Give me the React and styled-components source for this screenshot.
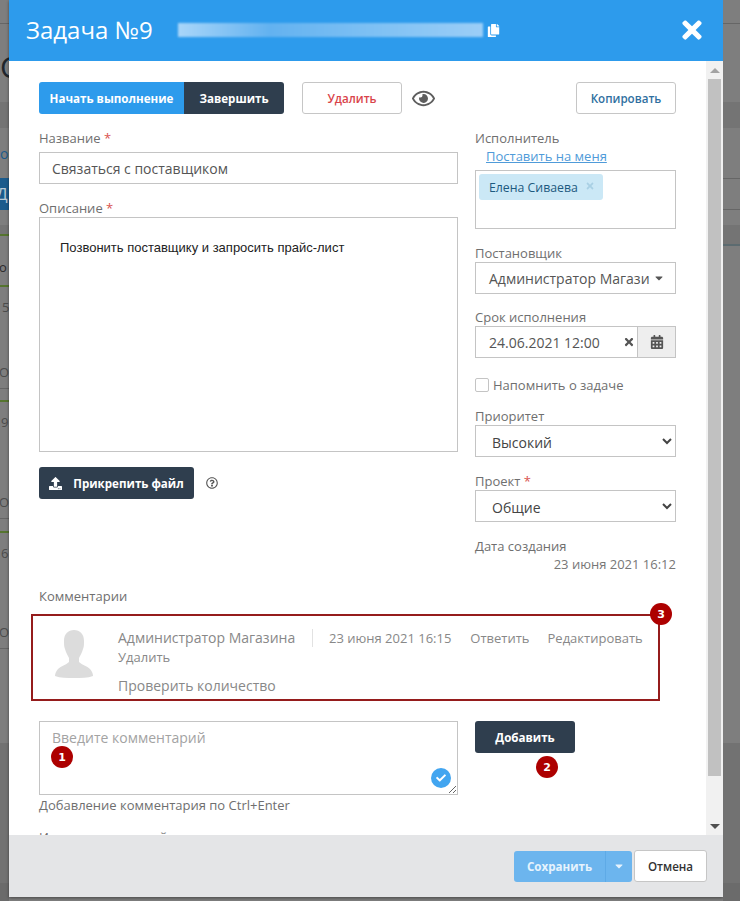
import React from 'react'
import styled, { createGlobalStyle } from 'styled-components'
import { FaCalendarAlt, FaCaretDown, FaCheck, FaCopy, FaRegEye, FaRegQuestionCircle, FaTimes, FaUpload } from 'react-icons/fa'

const GlobalStyle = createGlobalStyle`
    html, body {
        margin: 0;
        padding: 0;
        background: #7e7e7e;
    }
    * {
        box-sizing: border-box;
    }
`;

const base = '#7e7e7e';
const band = '#747474';
const line = '#666';
const green = '#56752f';
const dark = '#727272';
const darker = '#6b6b6b';

const leftRows = [
    { h: 23 }, { h: 1, bg: line }, { h: 26 },
    { h: 34, t: 'С', s: 30, c: '#20262c' },
    { h: 18 }, { h: 26, bg: band }, { h: 16 },
    { h: 20, t: 'о', s: 14, c: '#1b5b8c' },
    { h: 14 }, { h: 32, bg: '#1b5b8c', t: 'Д', s: 17, c: '#b8c8d4', x: -4 },
    { h: 15 }, { h: 9, bg: band }, { h: 2, bg: green }, { h: 20 },
    { h: 22, t: 'о', s: 13, c: '#2a2a2a', x: -1 },
    { h: 7 }, { h: 2, bg: green }, { h: 9 },
    { h: 22, t: '5', s: 13, c: '#4c4c4c', x: 2 },
    { h: 43 }, { h: 22, t: 'О', s: 13, c: '#4c4c4c', x: -1 },
    { h: 5 }, { h: 1, bg: line }, { h: 11 }, { h: 2, bg: green }, { h: 9 },
    { h: 22, t: '9', s: 13, c: '#4c4c4c', x: 1 },
    { h: 58 }, { h: 22, t: 'О', s: 13, c: '#4c4c4c', x: -1 },
    { h: 5 }, { h: 1, bg: line }, { h: 12 }, { h: 2, bg: green }, { h: 9 },
    { h: 22, t: '6', s: 13, c: '#4c4c4c', x: 1 },
    { h: 57 }, { h: 22, t: 'О', s: 13, c: '#4c4c4c', x: -1 },
    { h: 5 }, { h: 1, bg: line }, { h: 94 },
    { h: 140, bg: dark }, { h: 18, bg: darker },
];

const rightRows = [
    { h: 23 }, { h: 1, bg: line }, { h: 78 }, { h: 26, bg: band }, { h: 50 },
    { h: 1, bg: line }, { h: 30 }, { h: 1, bg: line }, { h: 15 },
    { h: 19, bg: band }, { h: 2, bg: '#5c6b70' }, { h: 497 },
    { h: 140, bg: dark }, { h: 18, bg: darker },
];

const Page = styled.div`
    display: grid;
    grid-template-columns: 9px 714px 17px;
    width: 740px;
    height: 901px;
    overflow: hidden;
    font-family: "Open Sans", sans-serif;
    font-size: 13px;
    color: #6f6f6f;
`;

const Strip = styled.div`
    display: flex;
    flex-direction: column;
    overflow: hidden;
`;

const StripRow = styled.div`
    flex: none;
    height: ${(props) => props.$h}px;
    background: ${(props) => props.$bg || base};
    color: ${(props) => props.$c || 'transparent'};
    font-size: ${(props) => props.$s || 13}px;
    line-height: ${(props) => props.$h}px;
    text-indent: ${(props) => props.$x || 0}px;
    white-space: nowrap;
    overflow: hidden;
`;

const Modal = styled.div`
    display: flex;
    flex-direction: column;
    height: 897px;
    background: #fff;
    box-shadow: 0 1px 3px rgba(0, 0, 0, 0.45);
`;

const Header = styled.header`
    flex: none;
    display: flex;
    align-items: center;
    height: 61px;
    padding: 0 17px 1px 17px;
    background: #2d9bec;
    color: #fff;
`;

const Title = styled.h1`
    margin: 0;
    width: 152px;
    font-size: 24px;
    font-weight: 400;
    line-height: 30px;
`;

const HiddenStripe = styled.div`
    width: 305px;
    height: 14px;
    background: linear-gradient(90deg, #a9d6f9, #63b2f0 30%, #7fc1f4 65%, #9bcef7);
    filter: blur(1px);
`;

const CopyIcon = styled(FaCopy)`
    margin-left: 4px;
    font-size: 13px;
`;

const CloseIcon = styled(FaTimes)`
    margin-left: auto;
    font-size: 28px;
`;

const Middle = styled.div`
    flex: 1;
    display: flex;
    min-height: 0;
`;

const Content = styled.div`
    flex: 1;
    min-width: 0;
    padding: 21px 30px 0;
    overflow: hidden;
`;

const Scrollbar = styled.div`
    flex: none;
    display: flex;
    flex-direction: column;
    align-items: center;
    width: 17px;
    background: #f1f1f1;
`;

const ScrollArrow = styled.div`
    flex: none;
    width: 0;
    height: 0;
    margin: ${(props) => (props.$down ? '48px 0 0' : '7px 0 0')};
    border-left: 5px solid transparent;
    border-right: 5px solid transparent;
    border-bottom: ${(props) => (props.$down ? '0' : '5px solid #a3a3a3')};
    border-top: ${(props) => (props.$down ? '5px solid #505050' : '0')};
`;

const ScrollThumb = styled.div`
    flex: none;
    width: 13px;
    height: 697px;
    margin-top: 6px;
    background: #c1c1c1;
`;

const Toolbar = styled.div`
    display: flex;
    align-items: center;
    height: 32px;
    margin-bottom: 15px;
`;

const SolidButton = styled.button`
    display: inline-flex;
    align-items: center;
    justify-content: center;
    width: ${(props) => props.$w}px;
    height: 32px;
    padding: 0;
    border: 0;
    border-radius: ${(props) => props.$radius || '3px'};
    background: ${(props) => props.$bg || '#2f3e4e'};
    color: #fff;
    font-family: inherit;
    font-size: 11.6px;
    font-weight: 700;
`;

const OutlineButton = styled.button`
    width: 100px;
    height: 32px;
    margin-left: ${(props) => props.$left || 0};
    padding: 0;
    border: 1px solid #c6c6c6;
    border-radius: 3px;
    background: #fff;
    color: ${(props) => props.$color};
    font-family: inherit;
    font-size: 11.6px;
    font-weight: 600;
`;

const EyeIcon = styled(FaRegEye)`
    margin-left: 10px;
    font-size: 23px;
    color: #5e5e5e;
`;

const Columns = styled.div`
    display: flex;
    gap: 17px;
`;

const LeftColumn = styled.div`
    flex: none;
    width: 419px;
`;

const RightColumn = styled.div`
    flex: none;
    width: 201px;
`;

const Field = styled.div`
    margin-top: ${(props) => props.$top ?? 15}px;
`;

const Label = styled.div`
    height: 18px;
    margin-bottom: ${(props) => props.$gap || 0}px;
    font-size: 13px;
    line-height: 18px;
    color: #6f6f6f;
`;

const Star = styled.span`
    color: #d9534f;
`;

const TextInput = styled.input`
    display: block;
    width: 100%;
    height: 32px;
    padding: 0 12px;
    border: 1px solid #c4c4c4;
    background: #fff;
    color: #555;
    font-family: inherit;
    font-size: 14px;
    outline: 0;
`;

const DescriptionBox = styled.div`
    height: 235px;
    padding: 21px 20px;
    border: 1px solid #c4c4c4;
    color: #222;
    font-family: "Liberation Sans", Arial, sans-serif;
    font-size: 13px;
    line-height: 18px;
`;

const AttachRow = styled.div`
    display: flex;
    align-items: center;
    margin-top: 15px;
`;

const AttachButton = styled(SolidButton)`
    gap: 11px;
`;

const HelpIcon = styled(FaRegQuestionCircle)`
    margin-left: 12px;
    font-size: 12px;
    color: #555;
`;

const AssignLink = styled.a`
    display: block;
    height: 23px;
    padding-left: 11px;
    color: #4f9bd9;
    font-size: 13px;
    line-height: 18px;
    text-decoration: underline;
`;

const TagBox = styled.div`
    height: 59px;
    padding: 3px;
    border: 1px solid #c4c4c4;
`;

const Tag = styled.span`
    display: inline-flex;
    align-items: center;
    gap: 7px;
    height: 26px;
    padding: 0 8px 0 10px;
    border-radius: 3px;
    background: #cbe8f6;
    color: #1d5a80;
    font-size: 12.3px;
`;

const TagClose = styled(FaTimes)`
    margin-top: -3px;
    font-size: 10px;
    color: #a9d0e4;
`;

const FakeSelect = styled.div`
    display: flex;
    align-items: center;
    justify-content: space-between;
    height: 32px;
    padding: 0 10px 0 13px;
    border: 1px solid #c4c4c4;
    color: #555;
    font-size: 14px;
    white-space: nowrap;
`;

const DateBox = styled.div`
    display: flex;
    align-items: center;
    height: 32px;
    border: 1px solid #c4c4c4;
`;

const DateInput = styled.input`
    flex: 1;
    min-width: 0;
    height: 100%;
    padding: 0 0 0 13px;
    border: 0;
    color: #555;
    font-family: inherit;
    font-size: 14px;
    outline: 0;
`;

const DateClear = styled(FaTimes)`
    flex: none;
    margin-right: 2px;
    font-size: 12px;
    color: #555;
`;

const DateAddon = styled.div`
    flex: none;
    display: flex;
    align-items: center;
    justify-content: center;
    width: 38px;
    height: 100%;
    border-left: 1px solid #c4c4c4;
    background: #eee;
    color: #555;
    font-size: 14px;
`;

const CheckRow = styled.label`
    display: flex;
    align-items: center;
    gap: 4px;
    height: 18px;
    margin-top: 18px;
    font-size: 13px;
    color: #6f6f6f;
`;

const CheckBox = styled.span`
    flex: none;
    width: 14px;
    height: 14px;
    border: 1px solid #c4c4c4;
    border-radius: 2px;
    background: #fff;
`;

const NativeSelect = styled.select`
    display: block;
    width: 100%;
    height: 32px;
    padding: 2px 12px 0;
    border: 1px solid #c4c4c4;
    border-radius: 0;
    background: #fff;
    color: #444;
    font-family: inherit;
    font-size: 14px;
    outline: 0;
`;

const CreatedAt = styled.div`
    height: 18px;
    font-size: 13px;
    line-height: 18px;
    text-align: right;
    color: #777;
`;

const CommentsBlock = styled.section`
    margin-top: 14px;
`;

const CommentCard = styled.div`
    position: relative;
    display: flex;
    width: 629px;
    height: 87px;
    margin: 9px 0 20px -8px;
    padding: 14px 0 0 22px;
    border: 2px solid #951c1c;
    color: #888;
`;

const Avatar = styled.svg`
    flex: none;
    width: 38px;
    height: 48px;
    margin-right: 25px;
`;

const CommentBody = styled.div`
    flex: 1;
    min-width: 0;
`;

const CommentMeta = styled.div`
    display: flex;
    align-items: center;
    height: 18px;
    margin-top: -1px;
    font-size: 13px;
    white-space: nowrap;
`;

const CommentAuthor = styled.span`
    width: 195px;
    height: 18px;
    margin-right: 16px;
    border-right: 1px solid #e2e2e2;
    font-size: 14px;
    line-height: 18px;
`;

const CommentAction = styled.span`
    margin-left: ${(props) => props.$left || 0}px;
`;

const CommentRemove = styled.div`
    height: 20px;
    font-size: 13px;
    line-height: 20px;
`;

const CommentText = styled.div`
    margin-top: 9px;
    font-size: 14px;
    line-height: 20px;
`;

const FormRow = styled.div`
    display: flex;
    gap: 17px;
`;

const AreaWrap = styled.div`
    position: relative;
    height: 74px;
`;

const CommentArea = styled.textarea`
    display: block;
    width: 100%;
    height: 74px;
    padding: 7px 12px;
    border: 1px solid #c4c4c4;
    color: #555;
    font-family: inherit;
    font-size: 14px;
    line-height: 18px;
    outline: 0;
    resize: vertical;

    &::placeholder {
        color: #a3a3a3;
        opacity: 1;
    }
`;

const CheckBadge = styled.div`
    position: absolute;
    left: 392px;
    top: 47px;
    display: flex;
    align-items: center;
    justify-content: center;
    width: 20px;
    height: 20px;
    border-radius: 50%;
    background: #42a5f0;
    color: #fff;
    font-size: 10px;
`;

const Hint = styled.div`
    margin-top: 1px;
    font-size: 13px;
    line-height: 18px;
    color: #6f6f6f;
`;

const HistoryTitle = styled.div`
    margin-top: 14px;
    font-size: 13px;
    line-height: 18px;
    color: #6f6f6f;
`;

const AddWrap = styled.div`
    position: relative;
`;

const Badge = styled.span`
    position: absolute;
    left: ${(props) => props.$x}px;
    top: ${(props) => props.$y}px;
    display: flex;
    align-items: center;
    justify-content: center;
    width: 22px;
    height: 22px;
    border-radius: 50%;
    background: #ad0000;
    color: #fff;
    font-family: "DejaVu Sans", sans-serif;
    font-size: 11px;
    font-weight: 700;
`;

const Footer = styled.footer`
    flex: none;
    display: flex;
    align-items: center;
    justify-content: flex-end;
    gap: 2px;
    height: 62px;
    padding-right: 16px;
    background: #e4e5e7;
`;

const SplitButton = styled.div`
    display: flex;
    height: 31px;
    border-radius: 3px;
    overflow: hidden;
    background: #6cb5ee;
    color: #e6f3fd;
    font-size: 11.6px;
    font-weight: 700;
`;

const SplitMain = styled.span`
    display: flex;
    align-items: center;
    justify-content: center;
    width: 92px;
    border-right: 1px solid #5eaae6;
`;

const SplitCaret = styled.span`
    display: flex;
    align-items: center;
    justify-content: center;
    width: 26px;
    font-size: 12px;
`;

const CancelButton = styled.button`
    width: 73px;
    height: 32px;
    padding: 0;
    border: 1px solid #c6c6c6;
    border-radius: 3px;
    background: #fff;
    color: #333;
    font-family: inherit;
    font-size: 11.6px;
    font-weight: 600;
`;

const StripRows = ({ rows }) => (
    <Strip>
        {rows.map((row, i) => (
            <StripRow key={i} $h={row.h} $bg={row.bg} $c={row.c} $s={row.s} $x={row.x}>
                {row.t}
            </StripRow>
        ))}
    </Strip>
);

const App = () => (
    <>
        <GlobalStyle />
        <Page>
            <StripRows rows={leftRows} />
            <Modal>
                <Header>
                    <Title>Задача №9</Title>
                    <HiddenStripe />
                    <CopyIcon />
                    <CloseIcon />
                </Header>
                <Middle>
                    <Content>
                        <Toolbar>
                            <SolidButton $w={145} $bg="#2d9bec" $radius="3px 0 0 3px">Начать выполнение</SolidButton>
                            <SolidButton $w={100} $radius="0 3px 3px 0">Завершить</SolidButton>
                            <OutlineButton $left="18px" $color="#d9434a">Удалить</OutlineButton>
                            <EyeIcon />
                            <OutlineButton $left="auto" $color="#2f6f9f">Копировать</OutlineButton>
                        </Toolbar>
                        <Columns>
                            <LeftColumn>
                                <Field $top={0}>
                                    <Label $gap={5}>Название <Star>*</Star></Label>
                                    <TextInput readOnly value="Связаться с поставщиком" />
                                </Field>
                                <Field>
                                    <Label>Описание <Star>*</Star></Label>
                                    <DescriptionBox>Позвонить поставщику и запросить прайс-лист</DescriptionBox>
                                </Field>
                                <AttachRow>
                                    <AttachButton $w={155}><FaUpload size={13} />Прикрепить файл</AttachButton>
                                    <HelpIcon />
                                </AttachRow>
                            </LeftColumn>
                            <RightColumn>
                                <Field $top={0}>
                                    <Label>Исполнитель</Label>
                                    <AssignLink>Поставить на меня</AssignLink>
                                    <TagBox>
                                        <Tag>Елена Сиваева<TagClose /></Tag>
                                    </TagBox>
                                </Field>
                                <Field>
                                    <Label>Постановщик</Label>
                                    <FakeSelect>
                                        <span>Администратор Магази</span>
                                        <FaCaretDown size={12} />
                                    </FakeSelect>
                                </Field>
                                <Field $top={14}>
                                    <Label>Срок исполнения</Label>
                                    <DateBox>
                                        <DateInput readOnly value="24.06.2021 12:00" />
                                        <DateClear />
                                        <DateAddon><FaCalendarAlt /></DateAddon>
                                    </DateBox>
                                </Field>
                                <CheckRow>
                                    <CheckBox />
                                    Напомнить о задаче
                                </CheckRow>
                                <Field $top={13}>
                                    <Label>Приоритет</Label>
                                    <NativeSelect defaultValue="high">
                                        <option value="high">Высокий</option>
                                    </NativeSelect>
                                </Field>
                                <Field>
                                    <Label>Проект <Star>*</Star></Label>
                                    <NativeSelect defaultValue="common">
                                        <option value="common">Общие</option>
                                    </NativeSelect>
                                </Field>
                                <Field>
                                    <Label>Дата создания</Label>
                                    <CreatedAt>23 июня 2021 16:12</CreatedAt>
                                </Field>
                            </RightColumn>
                        </Columns>
                        <CommentsBlock>
                            <Label>Комментарии</Label>
                            <CommentCard>
                                <Avatar viewBox="0 0 38 48">
                                    <path
                                        fill="#dcdcdc"
                                        d="M19 0c6 0 10 4 10 11 0 3 0 6-1 8-1 4-3 7-4 9v4c3 3 8 4 11 7 2 2 3 5 3 7-5 2-12 2-19 2S5 48 0 46c0-2 1-5 3-7 3-3 8-4 11-7v-4c-1-2-3-5-4-9-1-2-1-5-1-8C9 4 13 0 19 0z"
                                    />
                                </Avatar>
                                <CommentBody>
                                    <CommentMeta>
                                        <CommentAuthor>Администратор Магазина</CommentAuthor>
                                        <span>23 июня 2021 16:15</span>
                                        <CommentAction $left={19}>Ответить</CommentAction>
                                        <CommentAction $left={18}>Редактировать</CommentAction>
                                    </CommentMeta>
                                    <CommentRemove>Удалить</CommentRemove>
                                    <CommentText>Проверить количество</CommentText>
                                </CommentBody>
                                <Badge $x={617} $y={-13}>3</Badge>
                            </CommentCard>
                            <FormRow>
                                <LeftColumn>
                                    <AreaWrap>
                                        <CommentArea placeholder="Введите комментарий" />
                                        <Badge $x={12} $y={25}>1</Badge>
                                        <CheckBadge><FaCheck /></CheckBadge>
                                    </AreaWrap>
                                    <Hint>Добавление комментария по Ctrl+Enter</Hint>
                                    <HistoryTitle>История изменений</HistoryTitle>
                                </LeftColumn>
                                <AddWrap>
                                    <SolidButton $w={100}>Добавить</SolidButton>
                                    <Badge $x={61} $y={35}>2</Badge>
                                </AddWrap>
                            </FormRow>
                        </CommentsBlock>
                    </Content>
                    <Scrollbar>
                        <ScrollArrow />
                        <ScrollThumb />
                        <ScrollArrow $down />
                    </Scrollbar>
                </Middle>
                <Footer>
                    <SplitButton>
                        <SplitMain>Сохранить</SplitMain>
                        <SplitCaret><FaCaretDown /></SplitCaret>
                    </SplitButton>
                    <CancelButton>Отмена</CancelButton>
                </Footer>
            </Modal>
            <StripRows rows={rightRows} />
        </Page>
    </>
)

export default App
